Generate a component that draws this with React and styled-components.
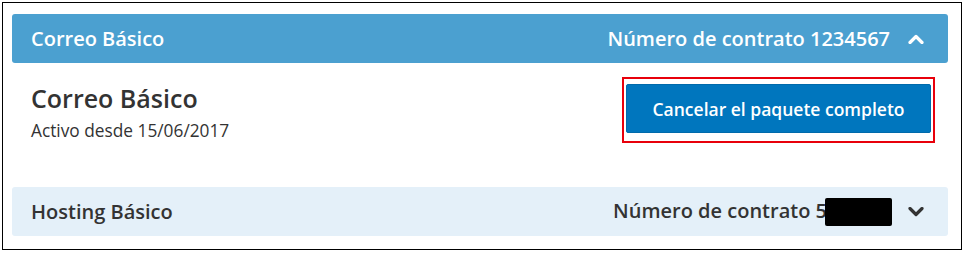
import React from "react";
import styled, { createGlobalStyle } from "styled-components";

const GlobalStyle = createGlobalStyle`
  html, body { margin: 0; padding: 0; background: #fff; }
  body { font-family: "Open Sans", "Liberation Sans", Arial, sans-serif; color: #333; }
`;

const Frame = styled.div`
  box-sizing: border-box;
  margin: 2px 0 0 2px;
  width: 960px;
  height: 248px;
  border: 1px solid #000;
  padding: 11px 13px 0 9px;
`;

const PanelHeader = styled.div`
  box-sizing: border-box;
  height: 49px;
  display: flex;
  align-items: center;
  justify-content: space-between;
  padding: 0 24px 0 19px;
  border-radius: 3px;
  background: ${(p) => (p.$open ? "#4ba0d0" : "#e4f0f9")};
  color: ${(p) => (p.$open ? "#fff" : "#333")};
  font-size: 20px;
  font-weight: 600;
  line-height: 26px;
`;

const Contract = styled.div`
  display: flex;
  align-items: center;
  gap: ${(p) => p.$gap}px;
`;

const Redacted = styled.span`
  display: inline-block;
  width: 67px;
  height: 28px;
  margin-left: -2px;
  background: #000;
  border-radius: 2px;
  vertical-align: -8px;
`;

const Chevron = styled.svg`
  display: block;
  width: 16px;
  height: 10px;
`;

const Body = styled.div`
  box-sizing: border-box;
  height: 124px;
  display: flex;
  justify-content: space-between;
  align-items: flex-start;
  padding: 14px 13px 0 19px;
`;

const Info = styled.div`
  margin-top: 7px;
`;

const Title = styled.h2`
  margin: 0;
  font-size: 25px;
  line-height: 29px;
  font-weight: 600;
  color: #333;
`;

const Since = styled.div`
  margin-top: 7px;
  font-size: 17.3px;
  line-height: 21px;
  color: #333;
`;

const Highlight = styled.div`
  border: 2px solid #e8000b;
  padding: 5px 2px 8px 2px;
`;

const CancelButton = styled.button`
  box-sizing: border-box;
  display: block;
  width: 305px;
  height: 49px;
  border: 1px solid #006aab;
  border-radius: 2px;
  background: #0076be;
  color: #fff;
  font-family: inherit;
  font-size: 17.5px;
  font-weight: 600;
  cursor: pointer;
`;

const ChevronIcon = ({ up }) => (
  <Chevron viewBox="0 0 16 10">
    <polyline
      points={up ? "2,8.5 8,2.5 14,8.5" : "2,1.5 8,7.5 14,1.5"}
      fill="none"
      stroke="currentColor"
      strokeWidth="3.2"
      strokeLinecap="round"
      strokeLinejoin="round"
    />
  </Chevron>
);

export default function App() {
  return (
    <>
      <GlobalStyle />
      <Frame>
        <PanelHeader $open>
          <span>Correo Básico</span>
          <Contract $gap={18}>
            <span>Número de contrato 1234567</span>
            <ChevronIcon up />
          </Contract>
        </PanelHeader>
        <Body>
          <Info>
            <Title>Correo Básico</Title>
            <Since>Activo desde 15/06/2017</Since>
          </Info>
          <Highlight>
            <CancelButton type="button">Cancelar el paquete completo</CancelButton>
          </Highlight>
        </Body>
        <PanelHeader>
          <span>Hosting Básico</span>
          <Contract $gap={16}>
            <span>
              Número de contrato 5<Redacted />
            </span>
            <ChevronIcon />
          </Contract>
        </PanelHeader>
      </Frame>
    </>
  );
}
